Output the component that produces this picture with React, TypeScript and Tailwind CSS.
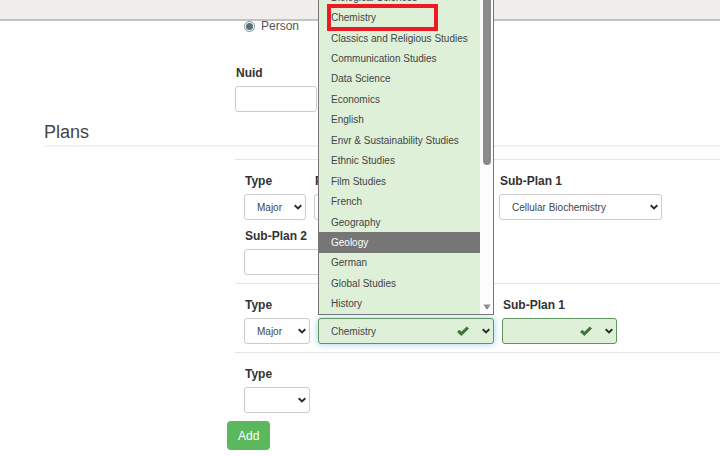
import { useId, type ReactNode } from "react";

const departments = [
  "Biological Sciences",
  "Chemistry",
  "Classics and Religious Studies",
  "Communication Studies",
  "Data Science",
  "Economics",
  "English",
  "Envr & Sustainability Studies",
  "Ethnic Studies",
  "Film Studies",
  "French",
  "Geography",
  "Geology",
  "German",
  "Global Studies",
  "History",
];

function Chevron() {
  return (
    <svg
      viewBox="0 0 8 6"
      className="pointer-events-none absolute right-1 top-1/2 h-1.5 w-2 -translate-y-1/2"
      aria-hidden="true"
    >
      <path d="M0.7 1.2 L4 4.4 L7.3 1.2" fill="none" stroke="#2b2b2b" strokeWidth="1.9" />
    </svg>
  );
}

function Check() {
  return (
    <svg
      viewBox="0 0 12 10"
      className="pointer-events-none absolute right-[25px] top-1/2 h-2.5 w-3 -translate-y-1/2"
      aria-hidden="true"
    >
      <path d="M0 6.1 L2.3 3.8 L4.4 5.7 L9.7 0.4 L12 2.5 L4.4 9.9 Z" fill="#3c763d" />
    </svg>
  );
}

type SelectFieldProps = {
  label: string;
  options: string[];
  width: string;
  valid?: boolean;
  focused?: boolean;
  children?: ReactNode;
};

function SelectField({ label, options, width, valid, focused, children }: SelectFieldProps) {
  const id = useId();
  const tone = valid ? "border-[#5f9360] bg-[#dff0d8]" : "border-[#cccccc] bg-white";
  const glow = focused ? "shadow-[0_0_6px_1px_#b5d9f0]" : "";
  return (
    <div className={`flex flex-col gap-[5px] ${width}`}>
      <label htmlFor={id} className="pl-px text-xs leading-4 font-bold whitespace-nowrap">
        {label}
      </label>
      <div className="relative">
        <select
          id={id}
          className={`block h-[26px] w-full appearance-none rounded-[3px] border pl-3 text-[10px] text-[#444444] outline-none ${tone} ${glow}`}
        >
          {options.map((option) => (
            <option key={option}>{option}</option>
          ))}
        </select>
        {valid && <Check />}
        <Chevron />
        {children}
      </div>
    </div>
  );
}

function TextField({ label, width }: { label: string; width: string }) {
  const id = useId();
  return (
    <div className={`flex flex-col gap-[5px] ${width}`}>
      <label htmlFor={id} className="pl-px text-xs leading-4 font-bold">
        {label}
      </label>
      <input
        id={id}
        type="text"
        className="h-[26px] w-full rounded-[3px] border border-[#cccccc] bg-white px-3 text-[10px]"
      />
    </div>
  );
}

function DepartmentList() {
  return (
    <div className="absolute bottom-full left-0 z-10 mb-[3px] flex h-[329px] w-full border border-[#767676] bg-[#fcfcfc]">
      <ul role="listbox" aria-label="Plan" className="grid flex-1 auto-rows-fr bg-[#dff0d8] text-[10px]">
        {departments.map((name) => (
          <li
            key={name}
            role="option"
            aria-selected={name === "Geology"}
            className={`relative flex items-center pl-3 whitespace-nowrap ${
              name === "Geology" ? "bg-[#767676] text-white" : "text-[#444444]"
            }`}
          >
            {name}
            {name === "Chemistry" && (
              <span className="absolute -inset-y-[3px] left-2 w-[111px] border-4 border-[#ed1c24]" />
            )}
          </li>
        ))}
      </ul>
      <div className="flex w-[13px] flex-col items-center justify-between pb-1">
        <div className="h-[178px] w-2 rounded-full bg-[#8b8b8b]" />
        <svg viewBox="0 0 8 6" className="h-1.5 w-2" aria-hidden="true">
          <path d="M0.5 0.5 H7.5 L4.6 5.3 H3.4 Z" fill="#8b8b8b" />
        </svg>
      </div>
    </div>
  );
}

function PlanRow({ children }: { children: ReactNode }) {
  return (
    <div className="flex flex-col gap-2 border-t border-[#e5e5e5] px-[9px] pt-[13px] pb-2">{children}</div>
  );
}

export default function App() {
  return (
    <div className="overflow-hidden bg-white font-['Liberation_Sans',Arial,sans-serif] text-[#333333]">
      <header className="h-[21px] border-b-2 border-[#c5c2be] bg-[#efeeec]" />
      <form className="pl-11">
        <div className="ml-[191px]">
          <label className="ml-[9px] flex h-2.5 items-center gap-1.5 text-xs text-[#555555]">
            <input
              type="radio"
              name="kind"
              defaultChecked
              className="size-[11px] appearance-none rounded-full border border-[#7d8f99] bg-[#5b6f7b] bg-clip-content p-px"
            />
            Person
          </label>
          <div className="mt-[34px]">
            <TextField label="Nuid" width="w-[82px]" />
          </div>
        </div>

        <h2 className="mt-2 mb-3 border-b-2 border-[#f2f2f2] pb-px text-lg leading-6 text-[#444444]">Plans</h2>

        <div className="ml-[191px]">
          <PlanRow>
            <div className="flex gap-2">
              <SelectField label="Type" options={["Major", "Minor"]} width="w-[62px]" />
              <SelectField label="Plan" options={["Biochemistry"]} width="w-[177px]" />
              <SelectField label="Sub-Plan 1" options={["Cellular Biochemistry"]} width="w-[163px]" />
            </div>
            <TextField label="Sub-Plan 2" width="w-[163px]" />
          </PlanRow>
          <PlanRow>
            <div className="flex gap-2">
              <SelectField label="Type" options={["Major", "Minor"]} width="w-[66px]" />
              <SelectField label="Plan" options={["Chemistry"]} width="w-[176px]" valid focused>
                <DepartmentList />
              </SelectField>
              <SelectField label="Sub-Plan 1" options={[""]} width="w-[115px]" valid />
            </div>
          </PlanRow>
          <PlanRow>
            <SelectField label="Type" options={["", "Major", "Minor"]} width="w-[66px]" />
          </PlanRow>
        </div>

        <button type="button" className="ml-[183px] h-[29px] rounded bg-[#5cb85c] px-[11px] text-xs text-white">
          Add
        </button>
      </form>
    </div>
  );
}
